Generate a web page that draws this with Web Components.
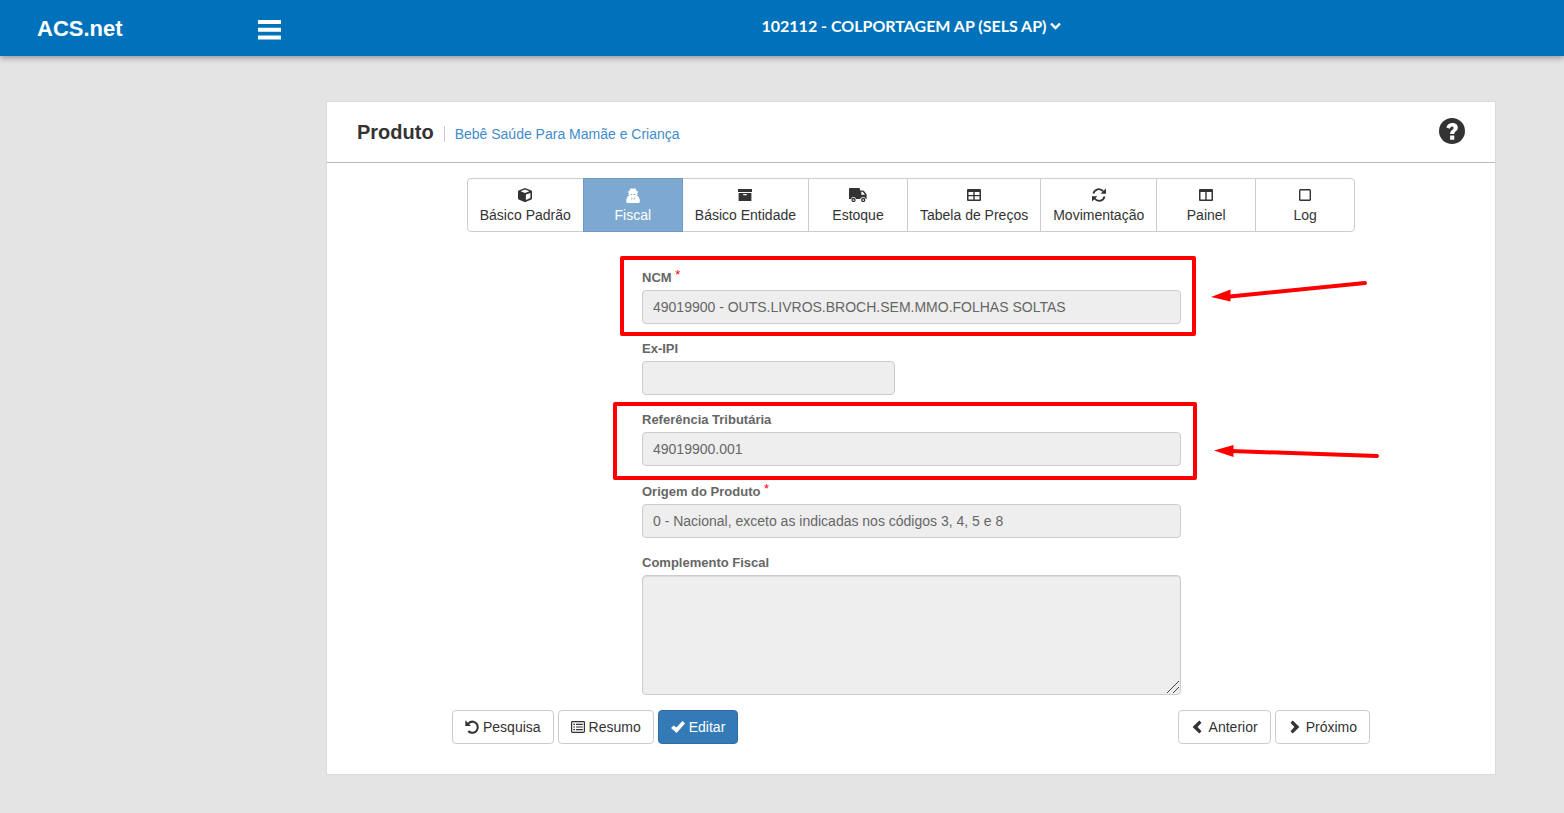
<!DOCTYPE html>
<html lang="pt-BR">
<head>
<meta charset="utf-8">
<title>ACS.net - Produto</title>
<style>
  body { margin: 0; min-height: 100vh; background: #e4e4e4; color: #333; font: 14px/20px "Liberation Sans", Arial, sans-serif; }
</style>
</head>
<body>
<acs-topbar brand="ACS.net">102112 - COLPORTAGEM AP (SELS AP)</acs-topbar>
<acs-page>
  <acs-panel heading="Produto">
    <a slot="subtitle" href="#produto">Bebê Saúde Para Mamãe e Criança</a>
    <acs-tabs>
      <acs-tab icon="cube">Básico Padrão</acs-tab>
      <acs-tab icon="secret" active>Fiscal</acs-tab>
      <acs-tab icon="archive">Básico Entidade</acs-tab>
      <acs-tab icon="truck">Estoque</acs-tab>
      <acs-tab icon="table">Tabela de Preços</acs-tab>
      <acs-tab icon="refresh">Movimentação</acs-tab>
      <acs-tab icon="columns">Painel</acs-tab>
      <acs-tab icon="square">Log</acs-tab>
    </acs-tabs>
    <acs-form>
      <acs-field label="NCM" required value="49019900 - OUTS.LIVROS.BROCH.SEM.MMO.FOLHAS SOLTAS">
        <acs-callout kind="up"></acs-callout>
      </acs-field>
      <acs-field label="Ex-IPI" short></acs-field>
      <acs-field label="Referência Tributária" value="49019900.001">
        <acs-callout kind="down"></acs-callout>
      </acs-field>
      <acs-field label="Origem do Produto" required value="0 - Nacional, exceto as indicadas nos códigos 3, 4, 5 e 8"></acs-field>
      <acs-field label="Complemento Fiscal" multiline></acs-field>
    </acs-form>
    <acs-actions slot="footer">
      <acs-button icon="undo">Pesquisa</acs-button>
      <acs-button icon="list">Resumo</acs-button>
      <acs-button icon="check" primary>Editar</acs-button>
      <acs-button slot="end" icon="left">Anterior</acs-button>
      <acs-button slot="end" icon="right">Próximo</acs-button>
    </acs-actions>
  </acs-panel>
</acs-page>

<script>
const ICONS = {
  cube: [14, 14, '<path fill-rule="evenodd" d="M7 0 13.4 2.4Q14 2.7 14 3.400V10.400Q14 11 13.400 11.400L7.500 14H6.500L.6 11.400Q0 11 0 10.400V3.400Q0 2.700.6 2.400ZM7 1.600 2.600 3.300 7 5 11.400 3.300ZM7.900 12 12.400 10V4.900L7.900 6.600Z"/>'],
  secret: [14, 15, '<path fill-rule="evenodd" d="M4.400.5Q5 0 5.800.4L7 .8 8.200.4Q9 0 9.600.5L10.600 3 12.400 3.700Q12.800 4.300 11.200 4.800L11.500 6 11 7.500Q13.400 8.500 13.800 12V13.800Q13.500 15 12.500 15H1.500Q.5 15 .2 13.800V12Q.6 8.500 3 7.500L2.500 6 2.800 4.800Q1.200 4.300 1.600 3.700L3.400 3ZM4.400 5.900 5 6.900H6L6.500 6.100H7.500L8 6.900H9L9.600 5.900ZM5.200 9.500 5.900 12.500 6.400 10.200ZM8.800 9.500 7.600 10.200 8.100 12.500Z"/>'],
  archive: [14, 12, '<path fill-rule="evenodd" d="M0 0H14V3H0ZM.6 4H13.400V12H.6ZM5.200 5V6.200H8.800V5Z"/>'],
  truck: [18, 14, '<path d="M1 0H10Q11 0 11 1V11H7Q6.600 9 4.500 9T2 11H0V1Q0 0 1 0Z"/><path fill-rule="evenodd" d="M11 2.500H14Q14.600 2.500 15 3L17.200 5.700Q17.600 6.200 17.600 7V11H16.800Q16.500 9 14.300 9T11 11ZM12.300 3.800V6.800H16L13.800 3.800Z"/><circle cx="4.500" cy="12" r="1.500" fill="none" stroke="currentColor" stroke-width="1.300"/><circle cx="14.200" cy="12" r="1.500" fill="none" stroke="currentColor" stroke-width="1.300"/>'],
  table: [14, 12, '<path fill-rule="evenodd" d="M1 0H13Q14 0 14 1V11Q14 12 13 12H1Q0 12 0 11V1Q0 0 1 0ZM1.500 3V6H6.300V3ZM7.700 3V6H12.500V3ZM1.500 7.300V10.500H6.300V7.300ZM7.700 7.300V10.500H12.500V7.300Z"/>'],
  refresh: [14, 14, '<g fill="none" stroke="currentColor" stroke-width="1.800"><path d="M1.500 5.500C2.500 1 8-.5 11.500 3.500"/><path d="M12.500 8.500C11.500 13 6 14.500 2.500 10.500"/></g><path d="M14 .5V5.800H8.600ZM0 13.500V8.200H5.400Z"/>'],
  columns: [14, 12, '<path fill-rule="evenodd" d="M1 0H13Q14 0 14 1V11Q14 12 13 12H1Q0 12 0 11V1Q0 0 1 0ZM1.500 3V10.500H6.300V3ZM7.700 3V10.500H12.500V3Z"/>'],
  square: [12, 12, '<rect x=".7" y=".7" width="10.600" height="10.600" rx=".8" fill="none" stroke="currentColor" stroke-width="1.400"/>'],
  undo: [14, 14, '<path d="M3.200 3.600C7-.3 12.800 2.200 12.700 7.200 12.600 12.600 6.500 14.500 3.300 11" fill="none" stroke="currentColor" stroke-width="2"/><path d="M.3.300V6H6Z"/>'],
  list: [14, 12, '<rect x=".6" y=".6" width="12.800" height="10.800" rx=".8" fill="none" stroke="currentColor" stroke-width="1.200"/><path d="M2.300 2.800H4V4H2.300ZM5 2.800H11.800V4H5ZM2.300 5.400H4V6.600H2.300ZM5 5.400H11.800V6.600H5ZM2.300 8H4V9.200H2.300ZM5 8H11.800V9.200H5Z"/>'],
  check: [14, 12, '<path d="M0 7 2.700 4.400 5.300 6.600 11.500 0 14 2.400 5.600 12Z"/>'],
  left: [12, 14, '<path d="M8.300.6 10.500 2.800 6.600 7 10.500 11.200 8.300 13.400 1.600 7Z"/>'],
  right: [12, 14, '<path d="M4.700.6 2.500 2.800 6.400 7 2.500 11.200 4.700 13.400 11.400 7Z"/>'],
  down: [11, 8, '<path d="M1 1.500 5.500 6 10 1.500" fill="none" stroke="currentColor" stroke-width="2.400"/>'],
  bars: [24, 20, '<path d="M0 .5Q0 0 .5 0H22.500Q23 0 23 .5V3.500Q23 4 22.500 4H.5Q0 4 0 3.500ZM0 8.300Q0 7.800.5 7.800H22.500Q23 7.800 23 8.300V11.300Q23 11.800 22.500 11.800H.5Q0 11.800 0 11.300ZM0 16.100Q0 15.600.5 15.600H22.500Q23 15.600 23 16.100V19.100Q23 19.600 22.500 19.600H.5Q0 19.600 0 19.100Z"/>'],
  question: [26, 26, '<circle cx="13" cy="13" r="13"/><path d="M7.300 9.400C8.600 3.700 18.800 3.500 18.800 9.600 18.800 13.300 15.300 13.300 15.300 16H11.100C11.100 11.800 14.500 12 14.500 9.900 14.500 8 11.700 8 11 10.700ZM11.100 17.500H15.300V21.700H11.100Z" fill="#fff"/>']
};

const define = (name, render) => customElements.define(name, class extends HTMLElement {
  connectedCallback() {
    if (!this.shadowRoot) this.attachShadow({ mode: "open" }).innerHTML = render(this);
  }
});

define("acs-icon", el => {
  const [w, h, art] = ICONS[el.getAttribute("name")];
  return `<style>:host{display:inline-flex}svg{display:block;fill:currentColor}</style>
    <svg width="${w}" height="${h}" viewBox="0 0 ${w} ${h}" aria-hidden="true">${art}</svg>`;
});

define("acs-topbar", el => `<style>
    :host { display: block; }
    header { display: grid; grid-template-columns: 258px 1fr; height: 56px; background: #0072bc; color: #fff; box-shadow: 0 2px 6px rgba(0,0,0,.35); }
    .brand { display: flex; align-items: center; padding: 2px 0 0 37px; color: #fff; text-decoration: none; font-size: 22px; font-weight: bold; }
    nav { display: grid; grid-template-columns: 1fr auto 1fr; align-items: center; }
    button { border: 0; padding: 0; background: none; color: inherit; cursor: pointer; }
    .menu { display: flex; justify-self: start; padding-top: 3px; }
    .entity { display: flex; align-items: center; gap: 3px; font: bold 16px/20px Lato, sans-serif; padding-bottom: 4px; }
  </style>
  <header><a class="brand" href="#inicio">${el.getAttribute("brand")}</a>
    <nav><button class="menu" aria-label="Menu"><acs-icon name="bars"></acs-icon></button>
    <button class="entity"><slot></slot><acs-icon name="down"></acs-icon></button></nav>
  </header>`);

define("acs-page", () => `<style>
    :host { display: block; padding: 45px 68px 38px 326px; }
    main { max-width: 1170px; margin: 0 auto; }
  </style><main><slot></slot></main>`);

define("acs-panel", el => `<style>
    :host { display: block; background: #fff; border: 1px solid #dadada; }
    header { display: flex; align-items: center; height: 60px; padding: 0 30px; border-bottom: 1px solid #b7bbbd; }
    h1 { margin: 0; font-size: 20px; line-height: 24px; color: #333; }
    .rule { width: 1px; height: 16px; margin: 4px 0 0 10px; background: #ccc; }
    .sub { display: flex; padding: 4px 0 0 10px; }
    ::slotted(a) { color: #428bca; text-decoration: none; }
    button { display: flex; margin-left: auto; padding: 0 0 3px; border: 0; background: none; color: #333; cursor: pointer; }
    .body { padding: 15px 125px 30px; }
  </style>
  <header><h1>${el.getAttribute("heading")}</h1><span class="rule"></span><span class="sub"><slot name="subtitle"></slot></span>
    <button aria-label="Ajuda"><acs-icon name="question"></acs-icon></button></header>
  <section class="body"><slot></slot><slot name="footer"></slot></section>`);

define("acs-tabs", () => `<style>
    :host { display: flex; justify-content: center; }
    nav { display: flex; padding-left: 1px; }
  </style><nav aria-label="Seções do produto"><slot></slot></nav>`);

define("acs-tab", el => `<style>
    :host { display: block; margin-left: -1px; }
    button { display: flex; flex-direction: column; align-items: center; box-sizing: border-box; min-width: 100px; height: 54px; padding: 6px 12px; border: 1px solid #ccc; background: #fff; color: #333; font: inherit; white-space: nowrap; cursor: pointer; }
    .icon { display: flex; align-items: center; height: 20px; }
    :host(:first-child) button { border-radius: 4px 0 0 4px; }
    :host(:last-child) button { border-radius: 0 4px 4px 0; }
    :host([active]) { position: relative; z-index: 1; }
    :host([active]) button { background: #7da8d0; border-color: #6d9ac2; color: #fff; }
  </style><button><span class="icon"><acs-icon name="${el.getAttribute("icon")}"></acs-icon></span><slot></slot></button>`);

define("acs-form", () => `<style>
    :host { display: block; }
    form { display: grid; gap: 17px; max-width: 539px; margin: 0 auto; padding: 37px 0 15px 1px; }
  </style><form><slot></slot></form>`);

define("acs-field", el => {
  const value = el.getAttribute("value") || "";
  return `<style>
    :host { display: block; position: relative; }
    label { display: block; box-sizing: border-box; height: 20px; font-size: 13px; font-weight: bold; line-height: 16px; color: #666; }
    :host([required]) label { height: 21px; padding-top: 1px; }
    sup { color: #f00; font-weight: normal; font-size: 13px; line-height: 0; vertical-align: 3px; }
    input, textarea { display: block; box-sizing: border-box; width: 100%; height: 34px; margin: 0; padding: 6px 10px; border: 1px solid #ccc; border-radius: 4px; background: #eee; color: #666; font: 14px/20px "Liberation Sans", Arial, sans-serif; outline: 0; }
    :host([short]) input { width: 47%; }
    textarea { height: 120px; resize: vertical; box-shadow: inset 0 1px 1px rgba(0,0,0,.08); }
    textarea::-webkit-resizer { background: none; }
    .grip { position: absolute; right: 1px; bottom: 1px; pointer-events: none; }
  </style>
  <label for="control">${el.getAttribute("label")}${el.hasAttribute("required") ? " <sup>*</sup>" : ""}</label>
  ${el.hasAttribute("multiline")
    ? '<textarea id="control" readonly></textarea><svg class="grip" width="14" height="14" aria-hidden="true"><path d="M1 13 13 1M7 13 13 7" stroke="#444"/></svg>'
    : `<input id="control" type="text" value="${value}" readonly>`}
  <slot></slot>`;
});

/* Red frame around a field with an arrow that points at it from the right. */
define("acs-callout", el => {
  const up = el.getAttribute("kind") === "up";
  return `<style>
    :host { position: absolute; inset: ${up ? "-13px -15px -12px -22px" : "-10px -16px -14px -29px"}; border: 4px solid #f00; border-radius: 2px; pointer-events: none; }
    svg { position: absolute; left: calc(100% + 20px); top: 20px; overflow: visible; }
  </style>
  <svg width="170" height="34" aria-hidden="true">${up
    ? '<path d="M18 16.500 153 3" stroke="#f00" stroke-width="4" stroke-linecap="round"/><path d="M-1 17 18.500 9.500V21.500Z" fill="#f00"/>'
    : '<path d="M18 25 164 30" stroke="#f00" stroke-width="4" stroke-linecap="round"/><path d="M1 24.500 20.500 19V31Z" fill="#f00"/>'}</svg>`;
});

define("acs-actions", () => `<style>
    :host { display: flex; justify-content: space-between; }
    div { display: flex; gap: 4px; }
  </style><div><slot></slot></div><div><slot name="end"></slot></div>`);

define("acs-button", el => `<style>
    :host { display: block; }
    button { display: flex; align-items: center; gap: 4px; height: 34px; padding: 6px 12px; border: 1px solid #ccc; border-radius: 4px; background: #fff; color: #333; font: inherit; white-space: nowrap; cursor: pointer; }
    :host([primary]) button { background: #337ab7; border-color: #2e6da4; color: #fff; }
    :host([slot="end"]) button { gap: 6px; }
  </style><button><acs-icon name="${el.getAttribute("icon")}"></acs-icon><slot></slot></button>`);
</script>
</body>
</html>
